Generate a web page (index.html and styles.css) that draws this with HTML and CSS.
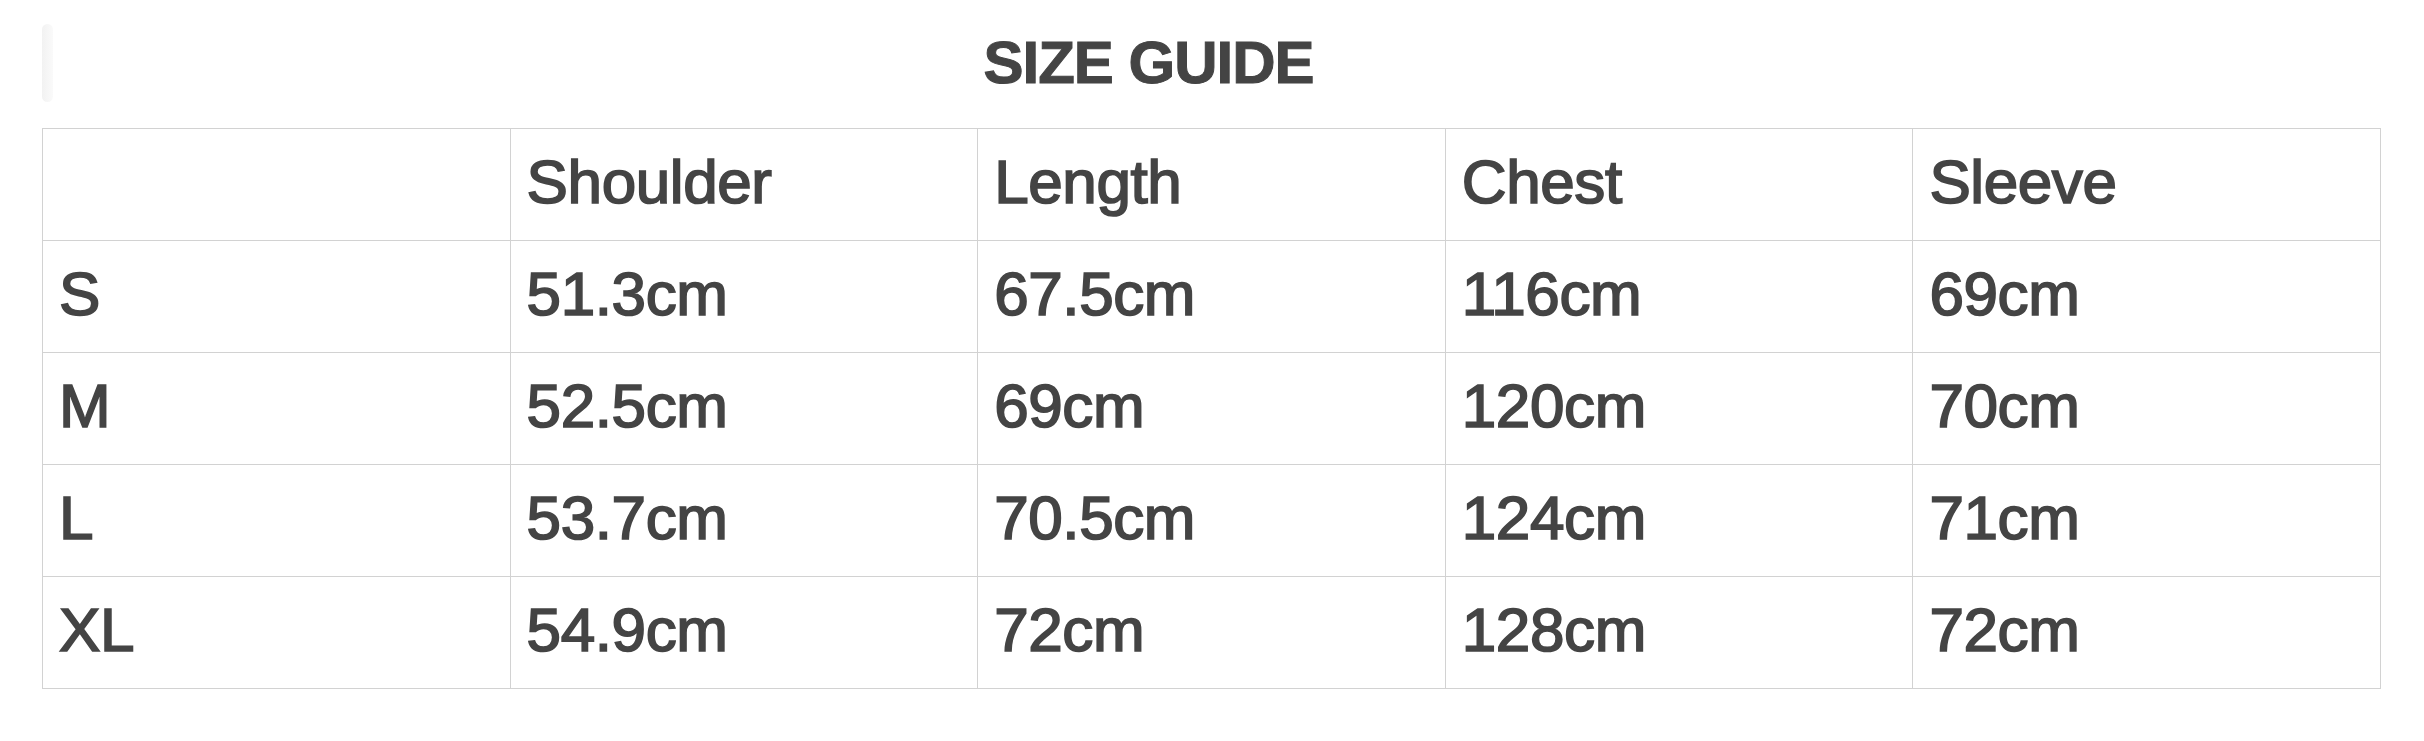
FILE: index.html
```html
<!DOCTYPE html>
<html lang="en">
<head>
<meta charset="utf-8">
<title>Size Guide</title>
<link rel="stylesheet" href="styles.css">
</head>
<body>
<div class="page">
  <header class="head">
    <span class="ghost"></span>
    <h1 class="title">SIZE GUIDE</h1>
  </header>
  <table class="sizes">
    <tr><td></td><td>Shoulder</td><td>Length</td><td>Chest</td><td>Sleeve</td></tr>
    <tr><td>S</td><td>51.3cm</td><td>67.5cm</td><td>116cm</td><td>69cm</td></tr>
    <tr><td>M</td><td>52.5cm</td><td>69cm</td><td>120cm</td><td>70cm</td></tr>
    <tr><td>L</td><td>53.7cm</td><td>70.5cm</td><td>124cm</td><td>71cm</td></tr>
    <tr><td>XL</td><td>54.9cm</td><td>72cm</td><td>128cm</td><td>72cm</td></tr>
  </table>
</div>
</body>
</html>
```
FILE: styles.css
```css
html, body {
  margin: 0;
  padding: 0;
  background: #ffffff;
}
.page {
  width: 2424px;
  height: 741px;
  padding: 0 43px 0 42px;
  box-sizing: border-box;
  font-family: "Liberation Sans", Arial, sans-serif;
  color: #444444;
}
.head {
  position: relative;
  height: 128px;
  display: flex;
  align-items: center;
  justify-content: center;
  padding-bottom: 3px;
  box-sizing: border-box;
}
.ghost {
  position: absolute;
  left: 0;
  top: 24px;
  width: 11px;
  height: 78px;
  border-radius: 6px;
  background: linear-gradient(90deg, #f2f2f2, #fafafa);
}
.title {
  margin: 0 126px 0 0;
  font-size: 60px;
  font-weight: 700;
  letter-spacing: -1px;
  line-height: 1;
  -webkit-text-stroke: 1px #444444;
}
.sizes {
  width: 100%;
  border-collapse: collapse;
  table-layout: fixed;
}
.sizes td {
  height: 112px;
  border: 1px solid #d2d2d2;
  padding: 0 0 5px 16px;
  font-size: 62px;
  letter-spacing: -0.4px;
  line-height: 1;
  vertical-align: middle;
  box-sizing: border-box;
  -webkit-text-stroke: 1.7px #444444;
}
```
